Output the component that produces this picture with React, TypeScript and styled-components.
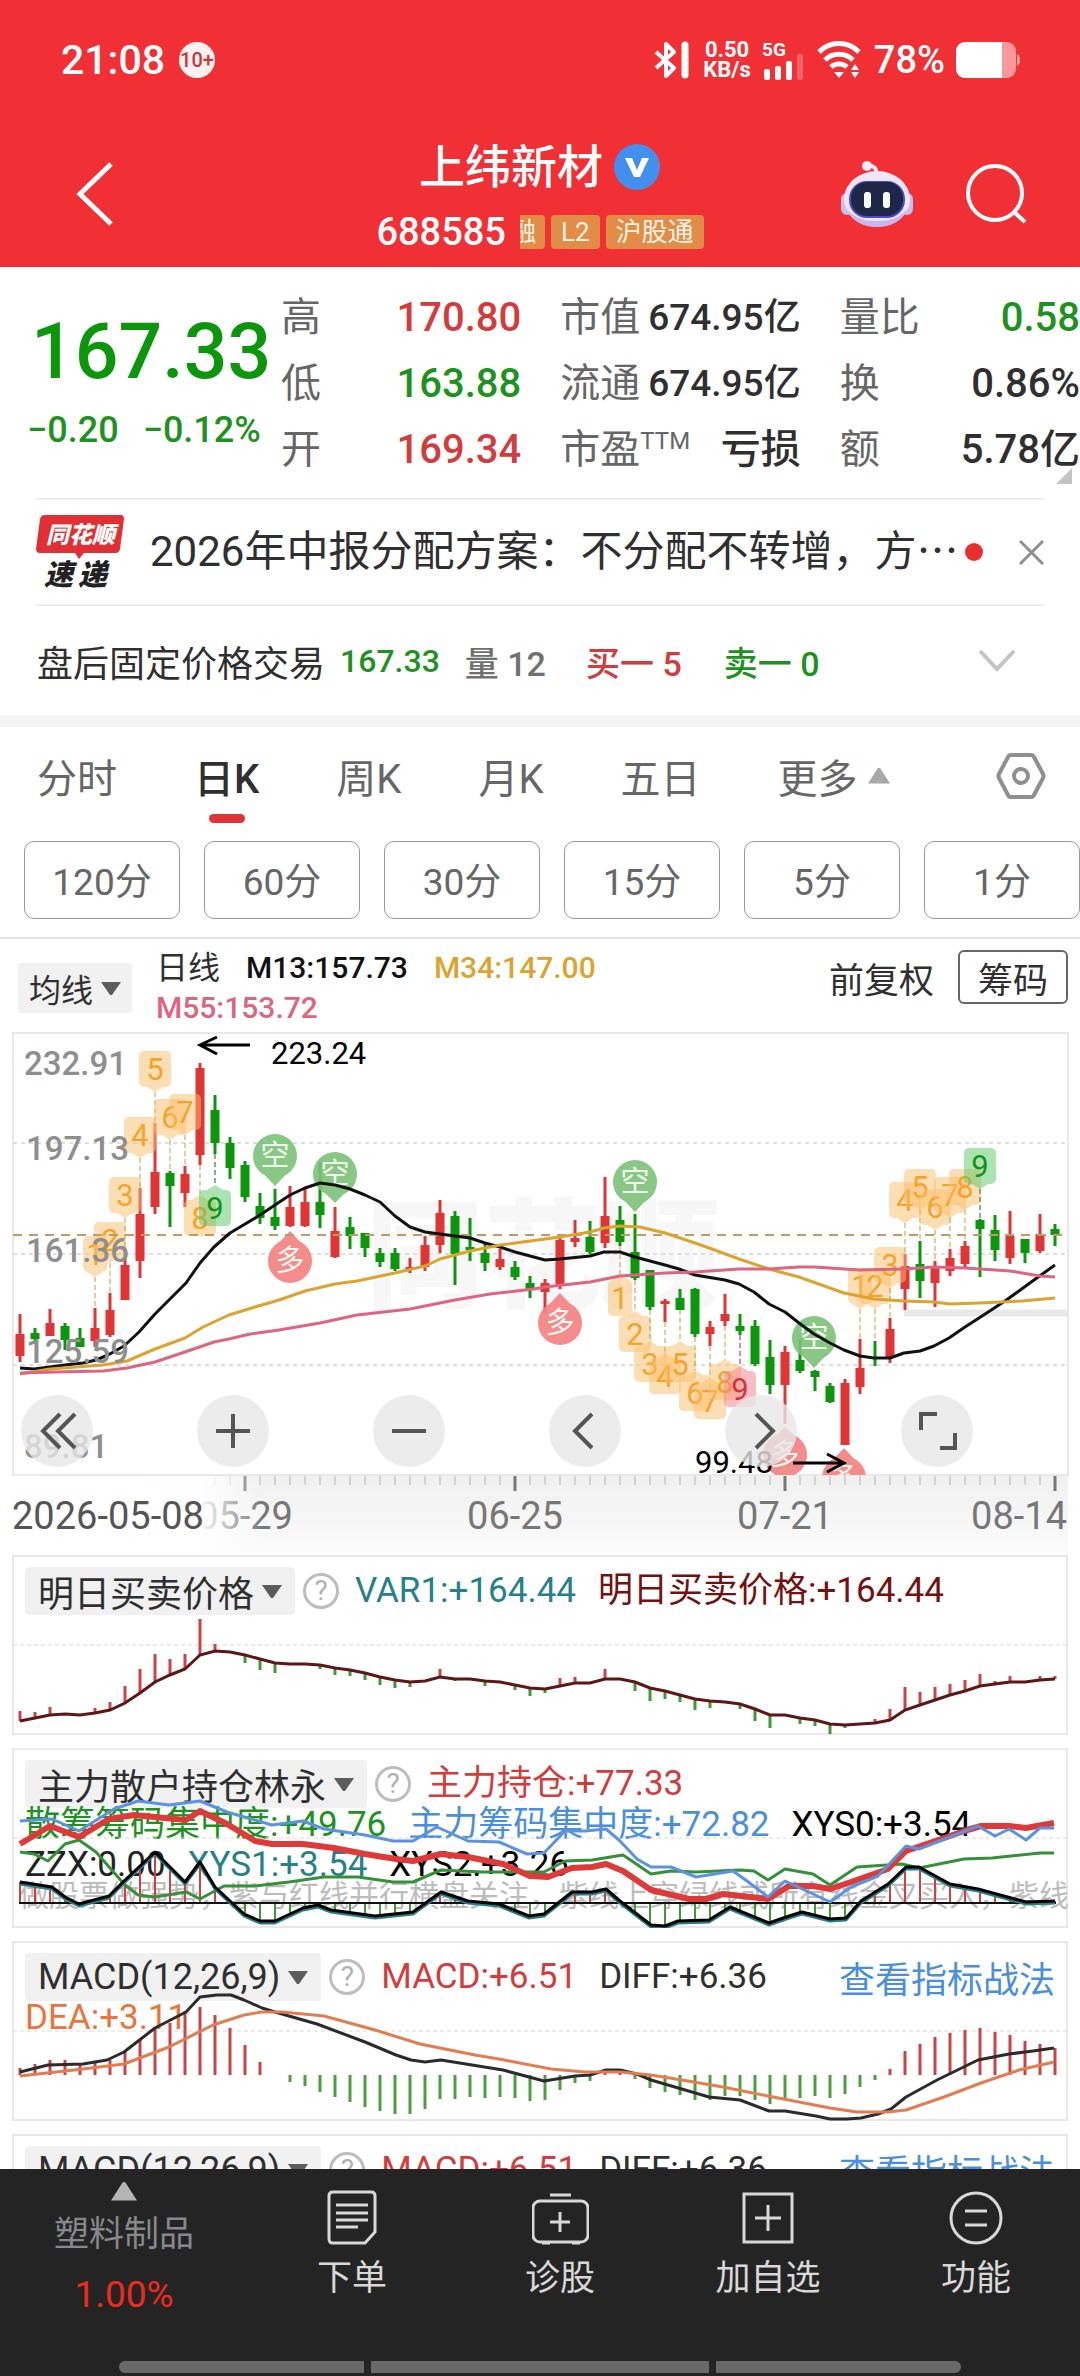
import * as React from 'react';
import styled, { createGlobalStyle } from 'styled-components';

const COLORS = Object.freeze({
  brand: '#f13035',
  up: '#d23c3c',
  down: '#1e9220',
  candleUp: '#e03535',
  candleDown: '#0c960c',
  ink: '#2f2f2f',
  grey: '#666666',
  line: '#e8e8e8',
  gold: '#dba32f',
  pink: '#dc6580',
  link: '#4a8fdb',
  teal: '#26808a',
});

/// DATA BELOW
/** ******************************************************************* */
type Candle = [number, number, number, number, number];

// [rising, high, body top, body bottom, low]
const CANDLES: Candle[] = [
  [1, 1314, 1334, 1356, 1362], [0, 1328, 1333, 1339, 1341], [1, 1309, 1323, 1336, 1336], [0, 1323, 1326, 1340, 1350],
  [0, 1328, 1338, 1347, 1347], [1, 1308, 1328, 1341, 1347], [1, 1293, 1310, 1335, 1337], [1, 1249, 1265, 1300, 1300],
  [1, 1188, 1214, 1261, 1278], [1, 1123, 1172, 1207, 1214], [0, 1171, 1173, 1186, 1227], [1, 1166, 1174, 1193, 1207],
  [1, 1063, 1068, 1155, 1165], [0, 1095, 1110, 1143, 1154], [0, 1137, 1143, 1168, 1179], [0, 1161, 1165, 1197, 1202],
  [0, 1193, 1206, 1218, 1224], [0, 1189, 1217, 1226, 1230], [1, 1186, 1207, 1226, 1227], [1, 1188, 1202, 1226, 1227],
  [0, 1162, 1202, 1215, 1228], [1, 1207, 1231, 1257, 1258], [0, 1217, 1227, 1236, 1249], [0, 1233, 1233, 1248, 1257],
  [0, 1248, 1253, 1262, 1267], [0, 1248, 1253, 1269, 1271], [1, 1258, 1267, 1269, 1273], [1, 1236, 1245, 1267, 1271],
  [1, 1200, 1213, 1245, 1253], [0, 1211, 1216, 1254, 1285], [0, 1218, 1247, 1250, 1261], [0, 1243, 1253, 1263, 1271],
  [1, 1249, 1259, 1267, 1270], [0, 1261, 1267, 1277, 1280], [0, 1276, 1283, 1290, 1298], [1, 1279, 1283, 1292, 1313],
  [1, 1234, 1240, 1285, 1289], [1, 1220, 1238, 1242, 1247], [0, 1221, 1237, 1252, 1254], [1, 1177, 1216, 1243, 1248],
  [0, 1206, 1220, 1242, 1246], [0, 1214, 1252, 1278, 1280], [0, 1270, 1270, 1307, 1310], [1, 1299, 1301, 1304, 1322],
  [0, 1289, 1298, 1310, 1310], [0, 1288, 1289, 1334, 1337], [1, 1321, 1327, 1334, 1346], [1, 1294, 1314, 1321, 1326],
  [0, 1314, 1326, 1331, 1335], [0, 1320, 1326, 1364, 1366], [0, 1340, 1357, 1385, 1394], [1, 1346, 1352, 1385, 1424],
  [0, 1339, 1360, 1371, 1373], [0, 1370, 1371, 1377, 1391], [0, 1383, 1386, 1402, 1403], [1, 1379, 1383, 1445, 1445],
  [1, 1339, 1368, 1387, 1394], [0, 1341, 1354, 1354, 1366], [1, 1318, 1329, 1358, 1363], [1, 1254, 1266, 1289, 1310],
  [0, 1241, 1264, 1281, 1298], [1, 1261, 1266, 1283, 1307], [1, 1249, 1258, 1271, 1276], [1, 1241, 1246, 1264, 1269],
  [0, 1219, 1220, 1229, 1277], [0, 1215, 1230, 1250, 1261], [1, 1211, 1236, 1258, 1264], [0, 1239, 1239, 1253, 1263],
  [1, 1214, 1234, 1251, 1253], [0, 1224, 1229, 1235, 1246],
];

const MA13 =
  '20,1368 34,1369 50,1367 65,1365 83,1363 96,1360 108,1355 124,1346 139,1332 155,1314 172,1297 186,1283 200,1263 214,1247 230,1233 257,1217 275,1205 290,1195 305,1188 320,1183 335,1185 350,1189 365,1195 380,1202 395,1216 410,1227 425,1232 455,1236 470,1238 485,1243 500,1247 515,1252 545,1260 560,1259 590,1256 604,1252 620,1252 635,1257 665,1265 679,1269 695,1275 725,1280 739,1284 754,1292 769,1304 785,1312 799,1323 814,1334 830,1343 844,1350 860,1356 874,1358 890,1358 904,1353 920,1351 934,1346 949,1338 965,1327 979,1318 1005,1301 1034,1280 1055,1265';
const MA34 =
  '20,1374 50,1369 103,1365 127,1361 155,1349 185,1338 203,1327 229,1315 255,1307 279,1300 305,1291 335,1284 357,1281 395,1273 425,1266 440,1259 470,1251 500,1245 545,1239 560,1237 590,1232 604,1228 620,1226 640,1227 665,1233 695,1243 712,1249 739,1259 769,1269 799,1277 830,1288 844,1293 874,1299 904,1301 934,1302 950,1304 979,1303 1022,1301 1055,1298';
const MA55 =
  '20,1373 55,1372 103,1371 127,1368 155,1362 182,1353 214,1342 229,1339 250,1334 279,1330 320,1323 357,1315 410,1309 455,1300 490,1294 534,1289 545,1287 590,1282 620,1276 665,1273 695,1272 739,1269 769,1269 799,1267 815,1267 859,1270 904,1269 934,1267 965,1268 1010,1271 1040,1276 1055,1277';

type Tone = 'orange' | 'green' | 'pink';
type Flag = { text: string; index: number; top: number; above: boolean; tone?: Tone };

const FLAGS: Flag[] = [
  { text: '1', index: 5, top: 1236, above: true },
  { text: '2', index: 6, top: 1222, above: true },
  { text: '3', index: 7, top: 1177, above: true },
  { text: '4', index: 8, top: 1117, above: true },
  { text: '5', index: 9, top: 1051, above: true },
  { text: '6', index: 10, top: 1099, above: true },
  { text: '7', index: 11, top: 1094, above: true },
  { text: '8', index: 12, top: 1200, above: false },
  { text: '9', index: 13, top: 1190, above: false, tone: 'green' },
  { text: '1', index: 40, top: 1280, above: false },
  { text: '2', index: 41, top: 1316, above: false },
  { text: '3', index: 42, top: 1346, above: false },
  { text: '4', index: 43, top: 1358, above: false },
  { text: '5', index: 44, top: 1346, above: false },
  { text: '6', index: 45, top: 1375, above: false },
  { text: '7', index: 46, top: 1383, above: false },
  { text: '8', index: 47, top: 1364, above: false },
  { text: '9', index: 48, top: 1371, above: false, tone: 'pink' },
  { text: '1', index: 56, top: 1268, above: true },
  { text: '2', index: 57, top: 1268, above: true },
  { text: '3', index: 58, top: 1247, above: true },
  { text: '4', index: 59, top: 1182, above: true },
  { text: '5', index: 60, top: 1169, above: true },
  { text: '6', index: 61, top: 1189, above: true },
  { text: '7', index: 62, top: 1177, above: true },
  { text: '8', index: 63, top: 1169, above: true },
  { text: '9', index: 64, top: 1148, above: true, tone: 'green' },
];

const TONES: Record<Tone, { fill: string; text: string; line: string }> = {
  orange: { fill: '#fbbf6b', text: '#f3a42c', line: '#c99a3a' },
  green: { fill: '#5cc868', text: '#129318', line: '#146b18' },
  pink: { fill: '#f47f8b', text: '#dc2f3c', line: '#8a1f8a' },
};

// [x, circle centre, tip]
const SHORT_PINS = [[275, 1156, 1186], [335, 1174, 1203], [635, 1182, 1212], [814, 1338, 1368]];
const LONG_PINS = [[290, 1261, 1231], [560, 1323, 1293], [785, 1455, 1427], [844, 1478, 1448]];

const PRICE_LINE = [
  166, 163, 160, 159, 160, 158, 155, 148, 138, 127, 120, 114, 100, 96, 97, 100, 104, 108, 109, 109, 110, 113, 115, 118,
  122, 125, 127, 126, 122, 124, 124, 126, 127, 130, 133, 134, 131, 128, 128, 124, 124, 127, 133, 136, 140, 144, 146, 147,
  149, 154, 160, 160, 163, 165, 169, 170, 169, 168, 165, 155, 150, 145, 140, 136, 131, 129, 127, 127, 125, 124,
];
const PRICE_SPIKES: Record<number, number> = {
  0: 156, 1: 157, 2: 152, 5: 153, 6: 147, 7: 131, 8: 114, 9: 99, 10: 104, 11: 99, 12: 64, 13: 89, 15: 108, 16: 115,
  17: 118, 20: 114, 21: 120, 22: 121, 23: 125, 24: 130, 25: 133, 26: 132, 28: 114, 29: 126, 31: 131, 33: 135, 34: 141,
  35: 138, 36: 123, 37: 122, 39: 114, 41: 136, 42: 146, 43: 144, 44: 147, 45: 155, 46: 153, 48: 154, 49: 166, 50: 173,
  52: 169, 53: 171, 54: 179, 55: 173, 57: 164, 58: 154, 59: 132, 60: 137, 61: 132, 62: 129, 63: 125, 64: 119, 65: 126,
  66: 121, 68: 121, 69: 121,
};

const HOLD_RED =
  '20,96 50,78 79,89 109,71 134,67 165,70 186,72 200,63 227,76 255,93 272,96 303,96 334,100 365,106 396,111 413,113 441,106 468,109 503,116 530,128 548,129 572,120 592,119 606,116 623,123 651,142 689,151 706,151 723,146 768,151 789,138 813,138 830,141 851,134 888,121 906,103 947,89 964,83 981,78 1009,78 1026,80 1054,75';
const HOLD_BLUE =
  '20,73 52,71 79,83 114,61 138,53 169,57 200,53 227,64 272,77 303,73 324,81 365,87 393,93 413,93 437,79 468,93 499,94 527,106 544,105 565,83 585,83 606,81 620,93 637,111 651,119 671,119 696,129 733,123 747,133 768,149 785,133 813,146 830,154 851,139 878,128 906,98 919,101 978,78 995,88 1009,81 1026,92 1040,80 1054,80';
const HOLD_GREEN =
  '20,104 34,106 48,113 65,96 79,92 96,104 124,136 138,147 155,149 186,144 200,151 224,138 255,138 289,134 324,129 358,129 393,134 413,134 441,122 482,124 544,124 565,113 592,112 623,107 651,126 671,123 696,124 740,122 754,123 768,132 785,121 813,126 830,137 857,119 902,116 919,120 964,111 992,110 1040,105 1054,105';
const HOLD_WAVE: [number, number][] = [
  [20, 134], [52, 139], [65, 149], [79, 156], [109, 148], [124, 133], [155, 104], [185, 134], [200, 114], [215, 139],
  [244, 166], [260, 173], [275, 173], [303, 160], [318, 157], [331, 162], [375, 168], [413, 164], [441, 144],
  [468, 153], [499, 156], [529, 168], [544, 166], [572, 144], [592, 144], [606, 141], [620, 153], [651, 177],
  [665, 178], [678, 173], [709, 172], [730, 159], [769, 175], [789, 168], [802, 164], [830, 171], [846, 170],
  [861, 153], [888, 136], [906, 119], [919, 119], [950, 136], [978, 141], [1026, 154], [1055, 153],
];

const MACD_BARS = [
  127, 123, 119, 119, 123, 121, 119, 110, 99, 86, 82, 70, 66, 74, 87, 104, 121, 134, 141, 145, 151, 156, 161, 166, 170,
  173, 173, 168, 158, 158, 156, 157, 156, 157, 160, 159, 149, 142, 140, 130, 130, 138, 147, 151, 154, 159, 159, 155,
  155, 159, 163, 159, 157, 155, 157, 153, 146, 139, 128, 110, 103, 96, 92, 89, 87, 91, 94, 100, 103, 107,
];
const DIFF_LINE =
  '20,131 48,124 83,123 107,119 124,111 155,87 186,71 200,56 217,54 231,54 244,59 262,67 275,71 317,83 365,101 396,114 411,119 425,121 441,119 472,124 503,129 544,140 575,135 590,134 606,129 620,129 637,133 651,139 709,156 740,159 769,170 785,170 816,175 830,178 847,178 861,177 878,173 891,168 906,156 937,139 978,119 1009,113 1033,110 1054,107';
const DEA_LINE =
  '20,135 83,128 124,123 169,106 213,84 244,74 262,71 282,71 324,75 375,89 420,103 475,114 499,118 551,128 585,131 620,131 651,134 682,139 723,146 768,155 830,167 857,171 888,171 906,169 944,156 981,142 1019,129 1054,121';

const TABS = ['分时', '日K', '周K', '月K', '五日'];
const PERIODS = ['120分', '60分', '30分', '15分', '5分', '1分'];

/// UTILS BELOW
/** ******************************************************************* */
const xAt = (index: number) => 20 + index * 15;

function waveAt(x: number) {
  const next = HOLD_WAVE.findIndex(([px]) => px >= x);
  if (next <= 0) return HOLD_WAVE[0][1];
  const [x0, y0] = HOLD_WAVE[next - 1];
  const [x1, y1] = HOLD_WAVE[next];
  return y0 + ((y1 - y0) * (x - x0)) / (x1 - x0);
}

/// STYLES BELOW
/** ******************************************************************* */
const GlobalStyle = createGlobalStyle`
  *, *::before, *::after { box-sizing: border-box; }
  body {
    margin: 0;
    background: #ffffff;
    color: ${COLORS.ink};
    font-family: Roboto, "Noto Sans CJK SC", sans-serif;
  }
  button {
    margin: 0;
    padding: 0;
    border: 0;
    background: none;
    color: inherit;
    font: inherit;
    cursor: pointer;
  }
  svg { display: block; flex: none; }
  dl, dt, dd, h1, p { margin: 0; }
`;

const Page = styled.div`
  display: flex;
  flex-direction: column;
  height: 100vh;
  overflow: hidden;
`;

const Content = styled.main`
  flex: 1;
  min-height: 0;
  overflow: hidden;
`;

const Header = styled.header`
  background: ${COLORS.brand};
  color: #ffffff;
`;

const StatusBar = styled.div`
  display: flex;
  align-items: center;
  height: 120px;
  padding: 0 60px 0 61px;
`;

const Clock = styled.span`
  font-size: 41px;
  font-weight: 500;
`;

const NoticeCount = styled.span`
  display: grid;
  place-items: center;
  width: 36px;
  height: 36px;
  margin-left: 14px;
  border-radius: 50%;
  background: #fff0f0;
  color: #c23a3c;
  font-size: 20px;
  font-weight: 500;
`;

const StatusIcons = styled.div`
  display: flex;
  align-items: center;
  gap: 11px;
  margin-left: auto;
`;

const Speed = styled.span`
  font-size: 22px;
  font-weight: 700;
  line-height: 20px;
  text-align: center;
`;

const Percent = styled.span`
  font-size: 38px;
  font-weight: 500;
`;

const TitleBar = styled.div`
  display: grid;
  grid-template-columns: 1fr auto 1fr;
  align-items: center;
  height: 147px;
  padding: 0 52px;
`;

const BackButton = styled.button`
  justify-self: start;
  margin-left: 24px;
`;

const TitleBlock = styled.div`
  display: flex;
  flex-direction: column;
  align-items: center;
  gap: 20px;
`;

const TitleLine = styled.div`
  display: flex;
  align-items: center;
  gap: 10px;
  height: 56px;
`;

const StockName = styled.h1`
  font-size: 46px;
  font-weight: 500;
  line-height: 56px;
`;

const CodeLine = styled.div`
  display: flex;
  align-items: center;
  gap: 6px;
  height: 34px;
`;

const Code = styled.span`
  margin-right: 8px;
  font-size: 38px;
  font-weight: 500;
`;

const Tag = styled.span<{ $clipped?: boolean }>`
  display: flex;
  justify-content: flex-end;
  width: ${(p) => (p.$clipped ? '25px' : 'auto')};
  height: 34px;
  padding: 0 ${(p) => (p.$clipped ? '9px' : '10px')};
  overflow: hidden;
  border-radius: ${(p) => (p.$clipped ? '0 4px 4px 0' : '4px')};
  background: #e28d47;
  color: #fff3e6;
  font-size: 26px;
  line-height: 34px;
`;

const TitleActions = styled.div`
  display: flex;
  align-items: center;
  justify-content: flex-end;
  gap: 50px;
`;

const Quote = styled.section`
  display: flex;
  position: relative;
  padding: 18px 0 15px;
`;

const PriceColumn = styled.div`
  display: flex;
  flex: 0 0 281px;
  flex-direction: column;
  justify-content: flex-end;
  padding: 0 0 31px 27px;
  color: ${COLORS.down};
`;

const Price = styled.strong`
  margin-bottom: 8px;
  padding-left: 4px;
  color: ${COLORS.candleDown};
  font-size: 77px;
  font-weight: 500;
  line-height: 96px;
`;

const Change = styled.div`
  display: flex;
  gap: 24px;
  font-size: 36px;
  font-weight: 500;
  line-height: 44px;
`;

const Stats = styled.dl`
  display: grid;
  flex: 1;
  grid-template-columns: repeat(3, 1fr);
  grid-auto-rows: 66px;
  column-gap: 39px;
`;

const Stat = styled.div`
  display: flex;
  align-items: center;
  justify-content: space-between;
  white-space: nowrap;
`;

const StatLabel = styled.dt`
  color: ${COLORS.grey};
  font-size: 40px;
  line-height: 66px;

  sup {
    font-size: 24px;
    line-height: 0;
  }
`;

const StatValue = styled.dd<{ $color?: string; $small?: boolean }>`
  color: ${(p) => p.$color ?? COLORS.ink};
  font-size: ${(p) => (p.$small ? '37px' : '40px')};
  font-weight: 500;
  line-height: 66px;
`;

const Corner = styled.i`
  position: absolute;
  right: 8px;
  bottom: 14px;
  border: 8px solid transparent;
  border-right-color: #c4c4c4;
  border-bottom-color: #c4c4c4;
`;

const News = styled.section`
  display: flex;
  align-items: center;
  height: 108px;
  margin: 0 36px;
  border-top: 2px solid #ededed;
  border-bottom: 2px solid #ededed;
`;

const NewsTitle = styled.a`
  flex: 1;
  margin-left: 26px;
  overflow: hidden;
  color: ${COLORS.ink};
  font-size: 42px;
  line-height: 60px;
  text-decoration: none;
  white-space: nowrap;
`;

const Dot = styled.i`
  width: 18px;
  height: 18px;
  margin-right: 36px;
  border-radius: 50%;
  background: #e53030;
`;

const FixedPrice = styled.section`
  display: flex;
  align-items: center;
  height: 109px;
  padding: 1px 64px 0 37px;
  font-size: 36px;
`;

const FixedItem = styled.span<{ $color?: string; $gap?: number; $small?: boolean }>`
  margin-left: ${(p) => p.$gap ?? 15}px;
  color: ${(p) => p.$color ?? COLORS.ink};
  font-size: ${(p) => (p.$small ? '32px' : '34px')};
  font-weight: 500;
`;

const Expand = styled.button`
  margin-left: auto;
`;

const Band = styled.div`
  height: 12px;
  background: #f4f4f4;
`;

const TabRow = styled.nav`
  display: flex;
  align-items: center;
  gap: 77px;
  height: 102px;
  padding: 0 34px 0 37px;
`;

const Tab = styled.button<{ $active?: boolean }>`
  display: flex;
  position: relative;
  align-items: center;
  gap: 10px;
  height: 102px;
  padding-bottom: 5px;
  color: ${(p) => (p.$active ? COLORS.ink : COLORS.grey)};
  font-size: 40px;
  font-weight: ${(p) => (p.$active ? 500 : 400)};

  &::after {
    content: '';
    display: ${(p) => (p.$active ? 'block' : 'none')};
    position: absolute;
    bottom: 6px;
    left: calc(50% - 18px);
    width: 36px;
    height: 9px;
    border-radius: 5px;
    background: #dc3437;
  }
`;

const Settings = styled.button`
  margin-left: auto;
  padding-bottom: 5px;
`;

const PeriodRow = styled.div`
  display: flex;
  gap: 24px;
  padding: 12px 0 18px 24px;
  border-bottom: 2px solid #e4e4e4;
`;

const Period = styled.button`
  flex: 1;
  height: 78px;
  padding-bottom: 2px;
  border: 1px solid #999999;
  border-radius: 10px;
  color: ${COLORS.grey};
  font-size: 37px;
`;

const AverageBar = styled.div`
  display: flex;
  align-items: center;
  padding: 9px 12px 4px 18px;
`;

const Dropdown = styled.button<{ $small?: boolean }>`
  display: flex;
  flex: none;
  align-items: center;
  gap: 8px;
  height: ${(p) => (p.$small ? '50px' : '48px')};
  padding: 0 ${(p) => (p.$small ? '11px' : '13px')};
  border-radius: 4px;
  background: #f1f1f1;
  font-size: ${(p) => (p.$small ? '32px' : '36px')};
`;

const Averages = styled.div`
  display: flex;
  flex: 1;
  flex-wrap: wrap;
  column-gap: 26px;
  padding: 0 80px 0 24px;
  font-size: 30px;
  font-weight: 500;
  line-height: 40px;
`;

const AverageName = styled.span`
  font-size: 32px;
  font-weight: 400;
`;

const Colored = styled.span<{ $color: string }>`
  color: ${(p) => p.$color};
`;

const AverageActions = styled.div`
  display: flex;
  align-items: center;
  align-self: flex-start;
  gap: 24px;
  padding-top: 2px;
  font-size: 35px;
`;

const ChipButton = styled.button`
  height: 54px;
  padding: 0 18px;
  border: 2px solid #666666;
  border-radius: 6px;
`;

const ChartArea = styled.section`
  position: relative;
  margin-bottom: 3px;

  > svg {
    width: 100%;
    height: auto;
  }
`;

const ChartTools = styled.div`
  display: flex;
  position: absolute;
  top: 363px;
  left: 21px;
  gap: 104px;
`;

const ToolButton = styled.button`
  display: grid;
  place-items: center;
  width: 72px;
  height: 72px;
  border-radius: 50%;
  background: rgba(231, 231, 231, 0.8);
`;

const Panel = styled.section`
  position: relative;
  height: 180px;
  margin: 0 12px 13px;
  border: 2px solid ${COLORS.line};
`;

const PanelDrawing = styled.svg`
  position: absolute;
  top: -2px;
  left: -2px;
  width: calc(100% + 4px);
  height: 180px;
  pointer-events: none;
`;

const PanelHead = styled.div`
  display: flex;
  align-items: center;
  height: 46px;
  margin: 11px 11px 0;
`;

const PanelValues = styled.div<{ $inset?: boolean }>`
  display: flex;
  flex: 1;
  gap: 22px;
  margin: ${(p) => (p.$inset ? '0 11px 4px' : '0 0 0 16px')};
  font-size: 35px;
  line-height: 36px;
  white-space: nowrap;
`;

const HelpButton = styled.button`
  display: grid;
  place-items: center;
  width: 36px;
  height: 36px;
  margin-left: 8px;
  border: 3px solid #bdbdbd;
  border-radius: 50%;
  color: #b0b0b0;
  font-size: 28px;
  line-height: 28px;
`;

const GuideLink = styled.a`
  margin-left: auto;
  color: ${COLORS.link};
  font-size: 36px;
  text-decoration: none;
`;

const BottomBar = styled.footer`
  flex: none;
  height: 207px;
  background: #242424;
  color: #d8d8d8;
`;

const BottomNav = styled.nav`
  display: grid;
  grid-template-columns: 248px repeat(4, 1fr);
  height: 192px;
`;

const BottomItem = styled.button`
  display: flex;
  flex-direction: column;
  align-items: center;
  gap: 6px;
  padding-top: 21px;
  font-size: 35px;
  line-height: 52px;
`;

const Sector = styled(BottomItem)`
  gap: 8px;
  padding-top: 12px;
  color: #88888c;
`;

const SectorRate = styled.span`
  color: #ee2a1e;
  font-size: 37px;
`;

const HomeIndicator = styled.div`
  display: grid;
  grid-template-columns: 245px 338px 245px;
  justify-content: center;
  gap: 7px;
  height: 12px;

  i {
    background: #696969;
  }
  i:first-child {
    border-radius: 6px 0 0 6px;
  }
  i:last-child {
    border-radius: 0 6px 6px 0;
  }
`;

/// ICONS BELOW
/** ******************************************************************* */
function Caret({ up, color = '#5c5c5c', size = 20 }: { up?: boolean; color?: string; size?: number }) {
  return (
    <svg width={size} height={size * 0.75} viewBox="0 0 20 15" aria-hidden>
      <path d={up ? 'M9 1h2l9 14H0z' : 'M0 1h20l-9 13H9z'} fill={color} />
    </svg>
  );
}

function StatusGlyphs() {
  return (
    <StatusIcons>
      <svg width="38" height="38" viewBox="0 0 38 38" fill="none" stroke="#fff" strokeWidth="4">
        <path d="M2 11l18 16-8 8V3l8 8L2 27" strokeLinejoin="round" />
        <path d="M31 4v30" strokeWidth="7" strokeLinecap="round" />
      </svg>
      <Speed>
        0.50
        <br />
        KB/s
      </Speed>
      <svg width="44" height="40" viewBox="0 0 44 40" fill="#fff">
        <text x="0" y="16" fontSize="19" fontWeight="700">
          5G
        </text>
        <rect x="2" y="29" width="6" height="11" rx="2" />
        <rect x="13" y="26" width="6" height="14" rx="2" />
        <rect x="24" y="21" width="6" height="19" rx="2" />
        <rect x="35" y="14" width="6" height="26" rx="2" opacity=".25" />
      </svg>
      <svg width="46" height="38" viewBox="0 0 46 38" fill="none" stroke="#fff" strokeWidth="5">
        <path d="M2 11a28 28 0 0 1 40 0M8 19a20 20 0 0 1 28 0M14 26a12 12 0 0 1 16 0" />
        <path d="M17 31h10l-5 6zM34 29l4-6 4 6zM34 31l4 6 4-6z" fill="#fff" stroke="none" />
      </svg>
      <Percent>78%</Percent>
      <svg width="64" height="36" viewBox="0 0 64 36">
        <rect width="60" height="36" rx="9" fill="#fff" opacity=".5" />
        <path d="M9 0h37v36H9a9 9 0 0 1-9-9V9a9 9 0 0 1 9-9z" fill="#fff" />
        <path d="M61 12c4 3 4 9 0 12z" fill="#fff" opacity=".6" />
      </svg>
    </StatusIcons>
  );
}

function RobotIcon() {
  return (
    <svg width="74" height="68" viewBox="0 0 74 68">
      <path d="M36 14c1-6-2-8-8-9" fill="none" stroke="#f3e6f6" strokeWidth="4" />
      <circle cx="27" cy="6" r="5" fill="#f7eefb" />
      <rect x="1" y="33" width="12" height="22" rx="6" fill="#c9bdf2" />
      <rect x="61" y="33" width="12" height="22" rx="6" fill="#c9bdf2" />
      <ellipse cx="37" cy="39" rx="33" ry="28" fill="#efe6fc" />
      <path d="M6 48c6 14 18 19 31 19s25-5 31-19c-8 10-18 13-31 13S14 58 6 48z" fill="#c6b7ee" />
      <rect x="9" y="21" width="56" height="37" rx="18" fill="#5546c8" />
      <rect x="11" y="22" width="52" height="34" rx="16" fill="#1d2848" />
      <rect x="24" y="32" width="7" height="16" rx="3" fill="#fff" />
      <rect x="43" y="32" width="7" height="16" rx="3" fill="#fff" />
    </svg>
  );
}

function NewsLogo() {
  return (
    <svg width="88" height="74" viewBox="0 0 88 74" role="img" aria-label="同花顺速递">
      <path d="M9 0h76q3 0 3 4l-4 30q-1 4-4 4H48l-5 6-4-6H4q-4 0-4-4L4 4q1-4 5-4z" fill="#e13034" />
      <g fontWeight="900" fontStyle="italic" fontFamily='"Noto Sans CJK SC", sans-serif'>
        <text x="10" y="28" fill="#fff" fontSize="23">
          同花顺
        </text>
        <text x="8" y="70" fill="#222" fontSize="29">
          速
        </text>
        <text x="42" y="70" fill="#222" fontSize="29">
          递
        </text>
      </g>
    </svg>
  );
}

const TOOL_ICONS: [string, string][] = [
  ['更早', 'M32 12L15 29l17 17M47 12L30 29l17 17'],
  ['放大', 'M29 12v34M12 29h34'],
  ['缩小', 'M12 29h34'],
  ['左移', 'M36 12L19 29l17 17'],
  ['右移', 'M24 12l17 17-17 17'],
  ['全屏', 'M13 28V12h16M47 31v15H32'],
];

const NAV_ITEMS: [string, React.ReactNode][] = [
  [
    '下单',
    <>
      <path d="M9 2h38q4 0 4 4v36L41 53H9q-4 0-4-4V6q0-4 4-4z" />
      <path d="M12 15h32M12 23h32M12 30h32M12 37h22" />
    </>,
  ],
  [
    '诊股',
    <>
      <rect x="1" y="11" width="55" height="41" rx="7" />
      <path d="M18 5h21M28 22v20M18 32h20M10 53h8M40 53h8" />
    </>,
  ],
  [
    '加自选',
    <>
      <rect x="4" y="4" width="48" height="48" />
      <path d="M28 15v26M15 28h26" />
    </>,
  ],
  [
    '功能',
    <>
      <circle cx="28" cy="28" r="25" />
      <path d="M17 21h22M17 35h22" />
    </>,
  ],
];

/// COMPONENTS BELOW
/** ******************************************************************* */
function FlagMark({ text, index, top, above, tone = 'orange' }: Flag) {
  const x = xAt(index);
  const { fill, text: ink, line } = TONES[tone];
  const half = text === '1' ? 12 : 16;
  const bottom = top + 36;
  const [, high, , , low] = CANDLES[index];
  const tip = above ? `M${x - 8} ${bottom}l8 5 8-5z` : `M${x - 8} ${top}l8-5 8 5z`;
  return (
    <g>
      <path d={above ? `M${x} ${bottom + 5}V${high}` : `M${x} ${low}V${top - 5}`} stroke={line} strokeDasharray="5 3" />
      <g fill={fill} opacity=".5">
        <rect x={x - half} y={top} width={half * 2} height="36" rx="5" />
        <path d={tip} />
      </g>
      <text x={x} y={top + 29} fill={ink} fontSize="31" textAnchor="middle">
        {text}
      </text>
    </g>
  );
}

function Pin({ x, y, tip, text, color }: { x: number; y: number; tip: number; text: string; color: string }) {
  const side = tip > y ? 14 : -14;
  return (
    <g>
      <g fill={color} opacity=".9">
        <path d={`M${x - 15} ${y + side}L${x} ${tip}l15 ${y + side - tip}z`} />
        <circle cx={x} cy={y} r="22" />
      </g>
      <text x={x} y={y + 10} fill="#eef8ee" fontSize="29" textAnchor="middle">
        {text}
      </text>
    </g>
  );
}

function CandleChart() {
  return (
    <svg viewBox="0 1032 1080 520" role="img" aria-label="日K线图">
      <defs>
        <clipPath id="plot">
          <rect x="13" y="1033" width="1055" height="442" />
        </clipPath>
        <linearGradient id="axis" x1="0" x2="0" y1="0" y2="1">
          <stop offset="0" stopColor="#f0f0f0" />
          <stop offset="1" stopColor="#fbfbfb" />
        </linearGradient>
        <linearGradient id="fade">
          <stop offset="0" stopColor="#fff" />
          <stop offset=".75" stopColor="#fff" stopOpacity=".95" />
          <stop offset="1" stopColor="#fff" stopOpacity="0" />
        </linearGradient>
      </defs>
      <rect x="13" y="1475" width="1055" height="78" fill="url(#axis)" />
      <rect x="13" y="1033" width="1055" height="442" fill="#fff" stroke={COLORS.line} strokeWidth="2" />
      <text x="366" y="1298" fill="#f7f7f7" fontSize="118" fontWeight="900">
        同花顺
      </text>
      {[1143, 1254, 1365].map((y) => (
        <path key={y} d={`M13 ${y}H1067`} stroke="#dedede" strokeWidth="2" strokeDasharray="4 4" />
      ))}
      <path d="M904 1313H1068" stroke="#e9e9e9" strokeWidth="7" />
      <g clipPath="url(#plot)">
        {CANDLES.map(([rising, high, top, bottom, low], index) => (
          <g key={index} fill={rising ? COLORS.candleUp : COLORS.candleDown}>
            <rect x={xAt(index) - 1.5} y={high} width="3" height={low - high} />
            <rect x={xAt(index) - 4.5} y={top} width="9" height={bottom - top} />
          </g>
        ))}
        {SHORT_PINS.map(([x, y, tip]) => (
          <Pin key={x} x={x} y={y} tip={tip} text="空" color="#7dc178" />
        ))}
        {LONG_PINS.map(([x, y, tip]) => (
          <Pin key={x} x={x} y={y} tip={tip} text="多" color="#f58080" />
        ))}
        {FLAGS.map((flag) => (
          <FlagMark key={flag.index} {...flag} />
        ))}
        <path d="M13 1235H1062" stroke="#bd9c66" strokeWidth="2" strokeDasharray="9 7" />
        <g fill="none" strokeWidth="3" strokeLinejoin="round">
          <polyline points={MA13} stroke="#111" />
          <polyline points={MA34} stroke={COLORS.gold} />
          <polyline points={MA55} stroke={COLORS.pink} />
        </g>
        <g fill="#8e8e8e" fontSize="33" fontWeight="500">
          <text x="24" y="1075">232.91</text>
          <text x="26" y="1160">197.13</text>
          <text x="26" y="1262">161.36</text>
          <text x="26" y="1363">125.59</text>
          <text x="24" y="1458">89.81</text>
        </g>
        <g fontSize="31" fill="#000">
          <text x="271" y="1064">223.24</text>
          <text x="695" y="1473">99.48</text>
        </g>
        <path d="M250 1045H200M217 1037l-17 8 17 9M793 1463h51M827 1454l17 9-17 9" fill="none" stroke="#000" strokeWidth="3" />
      </g>
      {Array.from({ length: 57 }, (_, n) => {
        const index = n + 13;
        const major = (index - 15) % 18 === 0;
        return (
          <path
            key={index}
            d={`M${xAt(index)} 1476V${major ? 1491 : 1485}`}
            stroke={major ? '#777' : '#b5b5b5'}
            strokeWidth={major ? 3 : 1}
          />
        );
      })}
      <g fill="#777" fontSize="38">
        <text x="245" y="1529" textAnchor="middle">05-29</text>
        <text x="515" y="1529" textAnchor="middle">06-25</text>
        <text x="785" y="1529" textAnchor="middle">07-21</text>
        <text x="1067" y="1529" textAnchor="end">08-14</text>
      </g>
      <rect x="13" y="1476" width="250" height="76" fill="url(#fade)" />
      <text x="12" y="1529" fill="#555" fontSize="38">
        2026-05-08
      </text>
    </svg>
  );
}

function PriceLineDrawing() {
  return (
    <PanelDrawing viewBox="12 0 1056 180" preserveAspectRatio="none">
      <path d="M13 90H1067" stroke="#d8d8d8" strokeDasharray="4 3" />
      {Object.entries(PRICE_SPIKES).map(([key, end]) => {
        const index = Number(key);
        const start = PRICE_LINE[index];
        return (
          <path
            key={key}
            d={`M${xAt(index)} ${start}V${end}`}
            stroke={end < start ? '#c94545' : '#3d9a35'}
            strokeWidth="3"
          />
        );
      })}
      <polyline
        points={PRICE_LINE.map((y, index) => `${xAt(index)},${y}`).join(' ')}
        fill="none"
        stroke="#5c1717"
        strokeWidth="3"
      />
    </PanelDrawing>
  );
}

function HoldingDrawing() {
  const wave = HOLD_WAVE.map((point) => point.join(',')).join(' ');
  return (
    <PanelDrawing viewBox="12 0 1056 180" preserveAspectRatio="none">
      <path d="M13 90H1067" stroke="#d8d8d8" strokeDasharray="4 3" />
      <text x="19" y="158" fill="#bcbcbc" fontSize="30">
        做股票做强势，紫与红线并行横盘关注，紫线上穿绿线或所有线金叉买入，紫线
      </text>
      {CANDLES.map((_, index) => {
        const y = waveAt(xAt(index));
        return <path key={index} d={`M${xAt(index)} 155V${y}`} stroke={y < 155 ? '#d04040' : '#3d9a35'} strokeWidth="2" />;
      })}
      <path d="M19 155H1056" stroke="#111" strokeWidth="2" />
      <g fill="none" strokeLinejoin="round">
        <polyline points={HOLD_GREEN} stroke="#35903a" strokeWidth="3" />
        <polyline points={HOLD_RED} stroke="#dd3a3a" strokeWidth="6" />
        <polyline points={HOLD_BLUE} stroke="#5b93df" strokeWidth="3" />
        <polyline points={wave} stroke={COLORS.teal} strokeWidth="3" transform="translate(0 2)" />
        <polyline points={wave} stroke="#000" strokeWidth="3" />
      </g>
    </PanelDrawing>
  );
}

function MacdDrawing() {
  return (
    <PanelDrawing viewBox="12 0 1056 180" preserveAspectRatio="none">
      <path d="M13 90H1067" stroke="#d8d8d8" strokeDasharray="4 3" />
      {MACD_BARS.map((y, index) => (
        <path key={index} d={`M${xAt(index)} 134V${y}`} stroke={y < 134 ? '#c94545' : '#4d9e3f'} strokeWidth="3" />
      ))}
      <g fill="none" strokeWidth="3" strokeLinejoin="round">
        <polyline points={DIFF_LINE} stroke="#2b2b2b" />
        <polyline points={DEA_LINE} stroke="#e27d52" />
      </g>
    </PanelDrawing>
  );
}

type IndicatorPropTypes = {
  name: string;
  values: [string, string][];
  rows?: [string, string][][];
  guide?: boolean;
  children?: React.ReactNode;
};

function Indicator({ name, values, rows = [], guide, children }: IndicatorPropTypes) {
  return (
    <Panel>
      <PanelHead>
        <Dropdown>
          {name}
          <Caret />
        </Dropdown>
        <HelpButton aria-label="指标说明">?</HelpButton>
        <PanelValues>
          {values.map(([text, color]) => (
            <Colored key={text} $color={color}>
              {text}
            </Colored>
          ))}
        </PanelValues>
        {guide && <GuideLink href="#guide">查看指标战法</GuideLink>}
      </PanelHead>
      {rows.map((row) => (
        <PanelValues key={row[0][0]} $inset>
          {row.map(([text, color]) => (
            <Colored key={text} $color={color}>
              {text}
            </Colored>
          ))}
        </PanelValues>
      ))}
      {children}
    </Panel>
  );
}

const MACD_VALUES: [string, string][] = [
  ['MACD:+6.51', COLORS.up],
  ['DIFF:+6.36', COLORS.ink],
];
const DEA_ROW: [string, string][][] = [[['DEA:+3.11', '#e8763c']]];

export default function App() {
  return (
    <Page lang="zh-CN">
      <GlobalStyle />
      <Header>
        <StatusBar>
          <Clock>21:08</Clock>
          <NoticeCount>10+</NoticeCount>
          <StatusGlyphs />
        </StatusBar>
        <TitleBar>
          <BackButton aria-label="返回">
            <svg width="38" height="64" viewBox="0 0 38 64" fill="none" stroke="#fff" strokeWidth="5">
              <path d="M35 2L4 32l31 30" />
            </svg>
          </BackButton>
          <TitleBlock>
            <TitleLine>
              <StockName>上纬新材</StockName>
              <svg width="48" height="48" viewBox="0 0 48 48">
                <circle cx="24" cy="24" r="23" fill="#438fee" />
                <path d="M12 15h7l5 12 5-12h7l-9 19h-6z" fill="#fff" />
              </svg>
            </TitleLine>
            <CodeLine>
              <Code>688585</Code>
              <Tag $clipped>融</Tag>
              <Tag>L2</Tag>
              <Tag>沪股通</Tag>
            </CodeLine>
          </TitleBlock>
          <TitleActions>
            <button aria-label="智能助手">
              <RobotIcon />
            </button>
            <button aria-label="搜索">
              <svg width="64" height="62" viewBox="0 0 64 62" fill="none" stroke="#fff" strokeWidth="4">
                <circle cx="31" cy="30" r="27" />
                <path d="M50 49l11 10" />
              </svg>
            </button>
          </TitleActions>
        </TitleBar>
      </Header>

      <Content>
        <Quote>
          <PriceColumn>
            <Price>167.33</Price>
            <Change>
              <span>−0.20</span>
              <span>−0.12%</span>
            </Change>
          </PriceColumn>
          <Stats>
            <Stat>
              <StatLabel>高</StatLabel>
              <StatValue $color={COLORS.up}>170.80</StatValue>
            </Stat>
            <Stat>
              <StatLabel>市值</StatLabel>
              <StatValue $small>674.95亿</StatValue>
            </Stat>
            <Stat>
              <StatLabel>量比</StatLabel>
              <StatValue $color={COLORS.down}>0.58</StatValue>
            </Stat>
            <Stat>
              <StatLabel>低</StatLabel>
              <StatValue $color={COLORS.down}>163.88</StatValue>
            </Stat>
            <Stat>
              <StatLabel>流通</StatLabel>
              <StatValue $small>674.95亿</StatValue>
            </Stat>
            <Stat>
              <StatLabel>换</StatLabel>
              <StatValue>0.86%</StatValue>
            </Stat>
            <Stat>
              <StatLabel>开</StatLabel>
              <StatValue $color={COLORS.up}>169.34</StatValue>
            </Stat>
            <Stat>
              <StatLabel>
                市盈<sup>TTM</sup>
              </StatLabel>
              <StatValue>亏损</StatValue>
            </Stat>
            <Stat>
              <StatLabel>额</StatLabel>
              <StatValue>5.78亿</StatValue>
            </Stat>
          </Stats>
          <Corner />
        </Quote>

        <News>
          <NewsLogo />
          <NewsTitle href="#news">2026年中报分配方案：不分配不转增，方⋯</NewsTitle>
          <Dot />
          <button aria-label="关闭">
            <svg width="25" height="25" viewBox="0 0 25 25" fill="none" stroke="#8f8f8f" strokeWidth="3">
              <path d="M1 1l23 23M24 1L1 24" />
            </svg>
          </button>
        </News>

        <FixedPrice>
          盘后固定价格交易
          <FixedItem $color={COLORS.down} $small>
            167.33
          </FixedItem>
          <FixedItem $color="#707070" $gap={25}>
            量 12
          </FixedItem>
          <FixedItem $color={COLORS.up} $gap={40}>
            买一 5
          </FixedItem>
          <FixedItem $color={COLORS.down} $gap={42}>
            卖一 0
          </FixedItem>
          <Expand aria-label="展开">
            <svg width="38" height="24" viewBox="0 0 38 24" fill="none" stroke="#c4c4c4" strokeWidth="4">
              <path d="M2 2l17 18L36 2" />
            </svg>
          </Expand>
        </FixedPrice>
        <Band />

        <TabRow>
          {TABS.map((tab) => (
            <Tab key={tab} $active={tab === '日K'}>
              {tab}
            </Tab>
          ))}
          <Tab>
            更多
            <Caret up color="#a8a8a8" size={22} />
          </Tab>
          <Settings aria-label="设置">
            <svg width="50" height="46" viewBox="0 0 50 46" fill="none" stroke="#8f8f8f" strokeWidth="4">
              <path d="M15 2h20q2 0 3 2l9 17q1 2 0 4l-9 17q-1 2-3 2H15q-2 0-3-2L3 25q-1-2 0-4l9-17q1-2 3-2z" />
              <circle cx="25" cy="23" r="7" />
            </svg>
          </Settings>
        </TabRow>
        <PeriodRow>
          {PERIODS.map((period) => (
            <Period key={period}>{period}</Period>
          ))}
        </PeriodRow>

        <AverageBar>
          <Dropdown $small>
            均线
            <Caret />
          </Dropdown>
          <Averages>
            <AverageName>日线</AverageName>
            <Colored $color="#111">M13:157.73</Colored>
            <Colored $color={COLORS.gold}>M34:147.00</Colored>
            <Colored $color={COLORS.pink}>M55:153.72</Colored>
          </Averages>
          <AverageActions>
            前复权
            <ChipButton>筹码</ChipButton>
          </AverageActions>
        </AverageBar>

        <ChartArea>
          <CandleChart />
          <ChartTools>
            {TOOL_ICONS.map(([label, path]) => (
              <ToolButton key={label} aria-label={label}>
                <svg width="58" height="58" viewBox="0 0 58 58" fill="none" stroke="#555" strokeWidth="4">
                  <path d={path} />
                </svg>
              </ToolButton>
            ))}
          </ChartTools>
        </ChartArea>

        <Indicator
          name="明日买卖价格"
          values={[
            ['VAR1:+164.44', COLORS.teal],
            ['明日买卖价格:+164.44', '#731010'],
          ]}
        >
          <PriceLineDrawing />
        </Indicator>
        <Indicator
          name="主力散户持仓林永"
          values={[['主力持仓:+77.33', COLORS.up]]}
          rows={[
            [
              ['散筹筹码集中度:+49.76', COLORS.down],
              ['主力筹码集中度:+72.82', COLORS.link],
              ['XYS0:+3.54', '#000'],
            ],
            [
              ['ZZX:0.00', '#222'],
              ['XYS1:+3.54', COLORS.teal],
              ['XYS2:+3.26', '#000'],
            ],
          ]}
        >
          <HoldingDrawing />
        </Indicator>
        <Indicator name="MACD(12,26,9)" values={MACD_VALUES} rows={DEA_ROW} guide>
          <MacdDrawing />
        </Indicator>
        <Indicator name="MACD(12,26,9)" values={MACD_VALUES} rows={DEA_ROW} guide>
          <MacdDrawing />
        </Indicator>
      </Content>

      <BottomBar>
        <BottomNav>
          <Sector>
            <Caret up color="#b5b5b5" size={26} />
            <span>塑料制品</span>
            <SectorRate>1.00%</SectorRate>
          </Sector>
          {NAV_ITEMS.map(([label, icon]) => (
            <BottomItem key={label}>
              <svg width="57" height="57" viewBox="0 0 57 57" fill="none" stroke="#d8d8d8" strokeWidth="3">
                {icon}
              </svg>
              {label}
            </BottomItem>
          ))}
        </BottomNav>
        <HomeIndicator>
          <i />
          <i />
          <i />
        </HomeIndicator>
      </BottomBar>
    </Page>
  );
}
